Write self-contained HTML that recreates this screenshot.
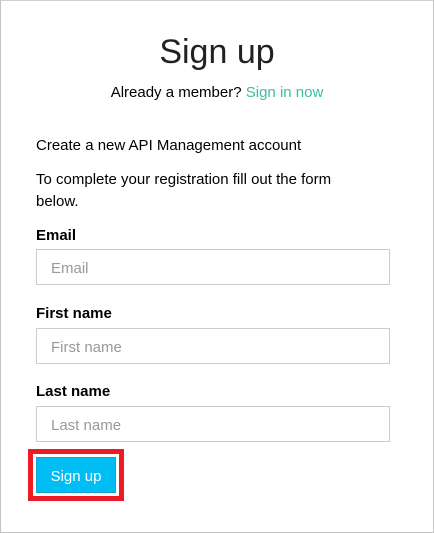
<!DOCTYPE html>
<html><head><style>
*{margin:0;padding:0;box-sizing:border-box}
body{width:434px;height:533px;background:#fff;font-family:"Segoe UI","Liberation Sans",sans-serif;color:#000;position:relative;overflow:hidden}
.frame{position:absolute;left:0;top:0;width:434px;height:533px;border:1px solid #c4c4c4;border-top-color:#d0d0d0}
.a{position:absolute;white-space:nowrap}
h1{position:absolute;top:30px;left:0;width:434px;text-align:center;font-weight:300;font-size:34px;color:#222;line-height:44px}
.t{font-size:15px;line-height:20px}
.lbl{font-size:15px;font-weight:bold;line-height:20px}
.in{position:absolute;left:36px;width:354px;height:36px;border:1px solid #ccc;font-size:15px;color:#999;padding:10px 14px;line-height:18px}
.red{position:absolute;left:28px;top:449px;width:96px;height:52px;border:5px solid #ed1c24}
.btn{position:absolute;left:36px;top:457px;width:80px;height:36px;background:#00bef3;border:1px solid #1aa0d0;color:#fff;font-size:15px;text-align:center;line-height:37px}
</style></head><body>
<div class="frame"></div>
<h1>Sign up</h1>
<div class="a t" style="top:83px;left:0;width:434px;text-align:center">Already a member? <span style="color:#3cbfa0">Sign in now</span></div>
<div class="a t" style="top:136px;left:36px">Create a new API Management account</div>
<div class="a t" style="top:170px;left:36px">To complete your registration fill out the form</div>
<div class="a t" style="top:192px;left:36px">below.</div>
<div class="a lbl" style="top:226px;left:36px">Email</div>
<div class="in" style="top:249px">Email</div>
<div class="a lbl" style="top:304px;left:36px">First name</div>
<div class="in" style="top:328px">First name</div>
<div class="a lbl" style="top:382px;left:36px">Last name</div>
<div class="in" style="top:406px">Last name</div>
<div class="red"></div>
<div class="btn">Sign up</div>
</body></html>
